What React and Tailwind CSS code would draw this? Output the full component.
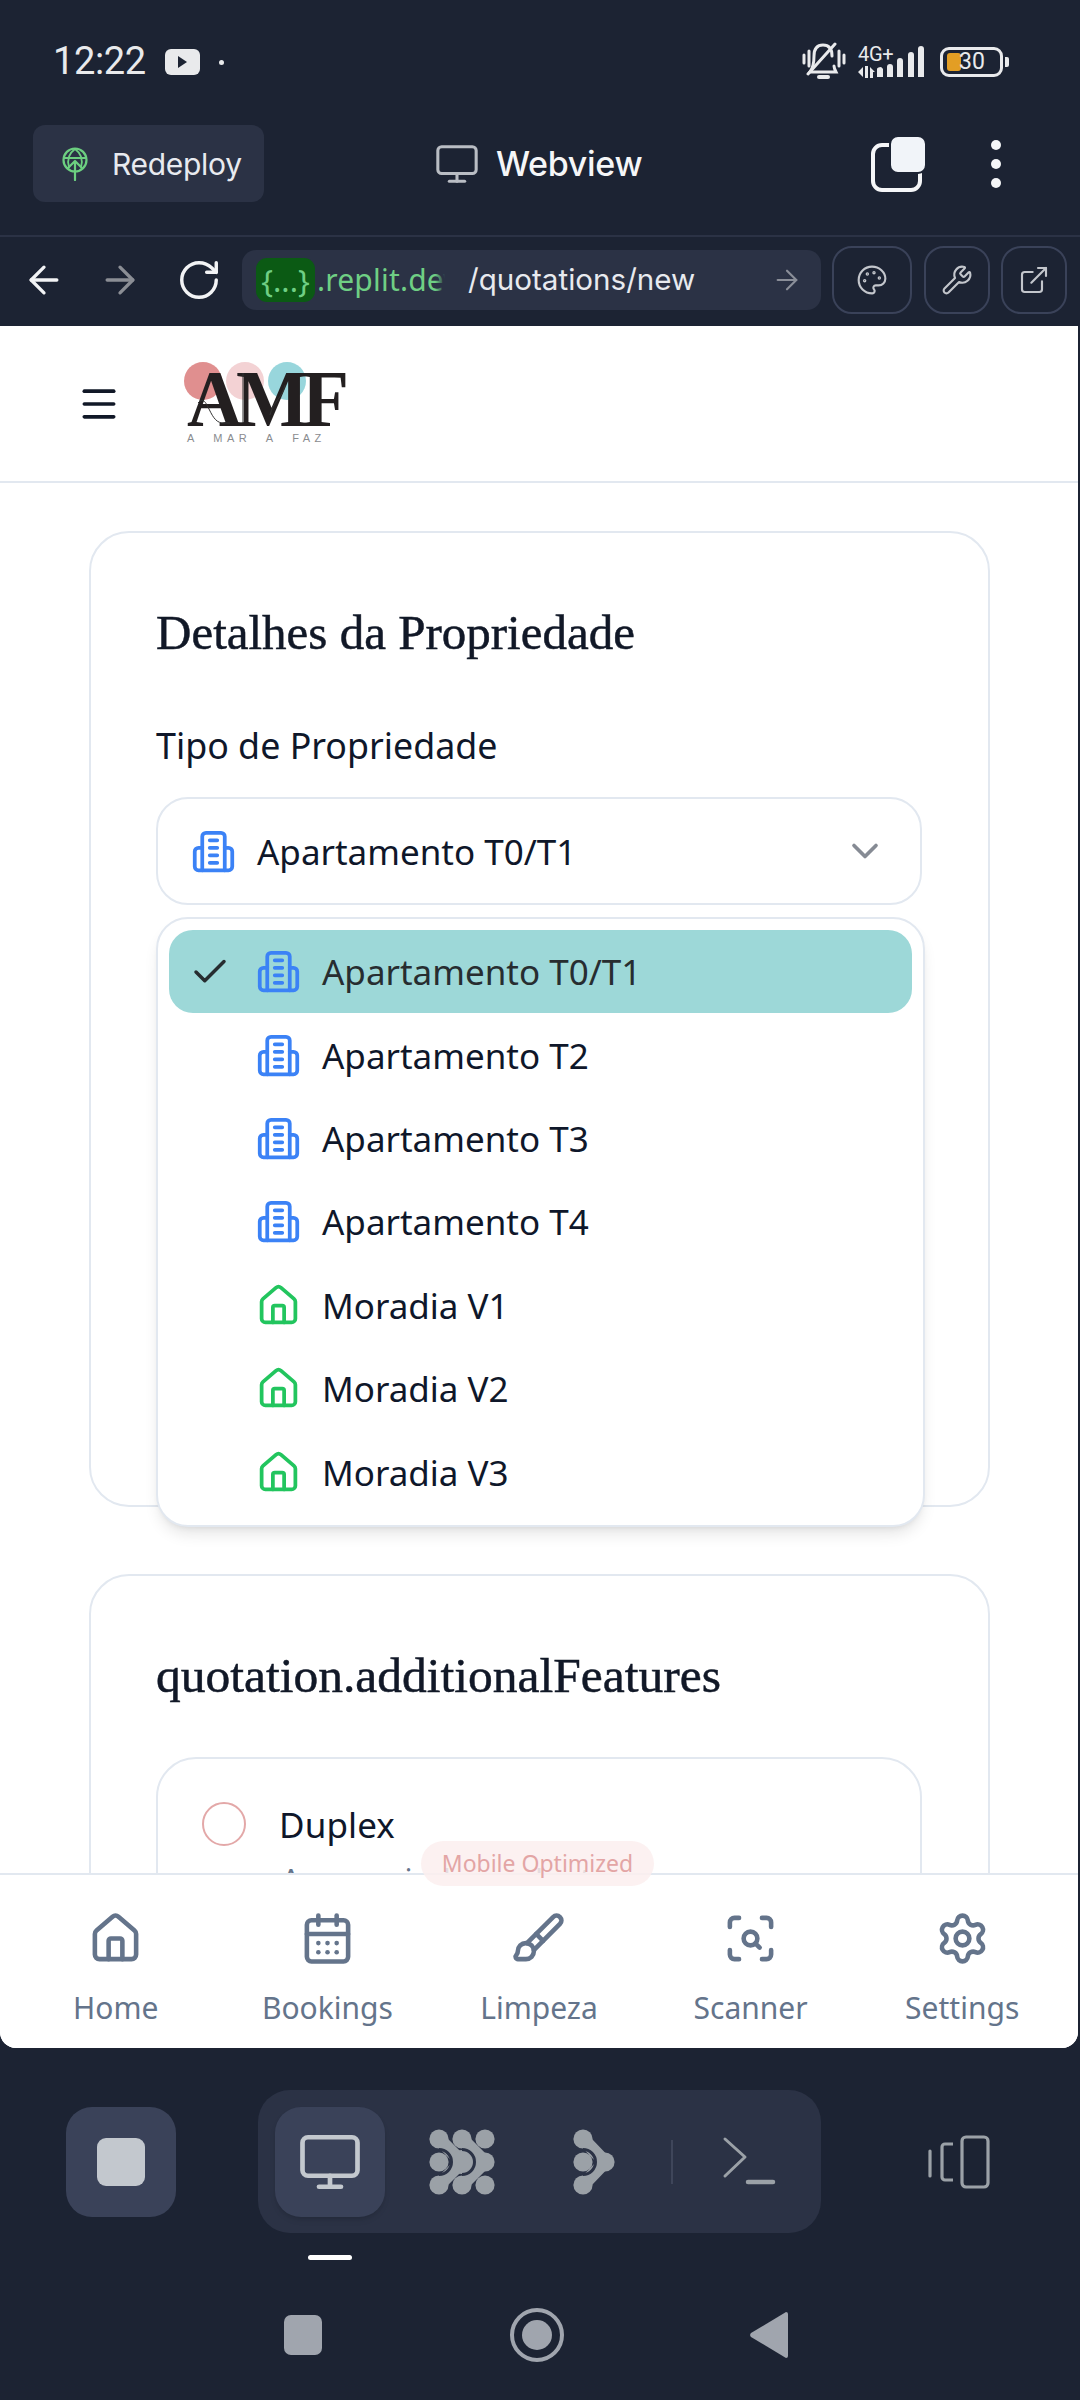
import React from "react";
import { House, CalendarDays, Brush, ScanSearch, Settings, Palette, Wrench, ExternalLink, RotateCw, ArrowLeft, ArrowRight, ChevronDown, Check, Monitor, Menu } from "lucide-react";

const sans = { fontFamily: '"Noto Sans", sans-serif' };

function Building({ className = "" }) {
  return (
    <svg width="45" height="45" viewBox="0 0 24 24" fill="none" stroke="#3b82f6" strokeWidth="2" strokeLinecap="round" strokeLinejoin="round" className={className}>
      <path d="M6 22V4a2 2 0 0 1 2-2h8a2 2 0 0 1 2 2v18Z" />
      <path d="M6 10H4a2 2 0 0 0-2 2v8a2 2 0 0 0 2 2h2" />
      <path d="M18 10h2a2 2 0 0 1 2 2v8a2 2 0 0 1-2 2h-2" />
      <path d="M10 6h4M10 10h4M10 14h4M10 18h4" />
    </svg>
  );
}

function HomeIcon() {
  return <House size={45} color="#22c55e" strokeWidth={2} />;
}

const options = [
  ["Apartamento T0/T1", "b", true],
  ["Apartamento T2", "b"],
  ["Apartamento T3", "b"],
  ["Apartamento T4", "b"],
  ["Moradia V1", "h"],
  ["Moradia V2", "h"],
  ["Moradia V3", "h"],
];

const navItems = [
  ["Home", House],
  ["Bookings", CalendarDays],
  ["Limpeza", Brush],
  ["Scanner", ScanSearch],
  ["Settings", Settings],
];

function StatusBar() {
  return (
    <div className="h-[125px] flex items-center text-[#e9eaec] pb-[1px]" style={{ fontFamily: "Roboto, sans-serif" }}>
      <div className="ml-[53px] w-[93px] text-[38px] leading-none mb-[2px] tracking-[-0.4px] whitespace-nowrap">12:22</div>
      <div className="ml-[19px] w-[35px] h-[26px] rounded-[6px] bg-[#e9eaec] flex items-center justify-center">
        <div className="w-0 h-0 border-y-[6px] border-y-transparent border-l-[9px] border-l-[#1c2333]" />
      </div>
      <div className="ml-[19px] w-[5px] h-[5px] rounded-full bg-[#e9eaec]" />
      <svg className="ml-[578px]" width="44" height="40" viewBox="0 0 44 40" fill="none" stroke="#e9eaec" strokeWidth="3" strokeLinecap="round">
        <path d="M2 13v8M42 13v8" strokeWidth="3" />
        <path d="M7 9v15M37 9v15" strokeWidth="3" />
        <path d="M30 14c0-7-3-11-9-11-6 0-9 4-9 11 0 6-1 12-4 16h26c-1-2-2-4-2-6" />
        <path d="M33 2 6 32" />
        <path d="M17 35h9" strokeWidth="4" />
      </svg>
      <div className="ml-[12px] w-[36px] flex flex-col">
        <div className="text-[20px] leading-[16px] tracking-[-0.3px] whitespace-nowrap">4G+</div>
        <svg width="36" height="14" viewBox="0 0 36 14" fill="#e9eaec" className="mt-[3px]">
          <path d="M0 7 5 2v10zM7 1h3v12H7zM12 2l5 5h-2v6h-3z" />
        </svg>
      </div>
      <svg className="ml-[-17px]" width="48" height="32" viewBox="0 0 48 32" fill="#e9eaec">
        <path d="M0 31V26a3 3 0 0 1 6-3v8zM21 0 M10 31V21a3 3 0 0 1 6 0v10zM20 31V15a3 3 0 0 1 6 0v16zM31 31V9a3 3 0 0 1 6 0v22zM41 31V3a3 3 0 0 1 6 0v28z" />
      </svg>
      <div className="ml-[15px] relative w-[63px] h-[30px] rounded-[9px] border-[3px] border-[#e9eaec]">
        <div className="absolute left-[4px] top-[3px] w-[14px] h-[18px] rounded-[3px] bg-[#e39e24]" />
        <div className="absolute left-[16px] top-[-1px] text-[23px] leading-[26px]">30</div>
      </div>
      <div className="ml-[2px] w-[4px] h-[10px] rounded-r-[2px] bg-[#e9eaec]" />
    </div>
  );
}

function ToolbarRow() {
  return (
    <div className="h-[112px] border-b-2 border-[#2b3245] text-white" style={{ fontFamily: "Inter, sans-serif" }}>
      <div className="h-[77px] flex items-center">
        <div className="ml-[33px] w-[231px] h-[77px] rounded-[12px] bg-[#2b3245] flex items-center">
          <svg className="ml-[29px]" width="26" height="34" viewBox="0 0 26 34" fill="none" stroke="#6ccf80" strokeWidth="2.2" strokeLinecap="round" strokeLinejoin="round">
            <circle cx="13" cy="13" r="11.5" />
            <path d="M2 11h22M13 2c-7 5-8 11-6 18M13 2c7 5 8 11 6 18" strokeWidth="1.8" />
            <path d="M13 33V14M6 21l7-7 7 7" stroke="#6ccf80" />
          </svg>
          <div className="ml-[24px] text-[30px] leading-none text-[#e8eaef] tracking-[-0.3px]">Redeploy</div>
        </div>
        <Monitor className="ml-[170px]" size={46} color="#b9bdc4" strokeWidth={1.6} />
        <div className="ml-[16px] text-[34px] leading-none font-medium text-[#f5f6f8] tracking-[-0.3px]">Webview</div>
        <svg className="ml-[228px]" width="56" height="56" viewBox="0 0 56 56" fill="none">
          <rect x="3" y="9" width="47" height="45" rx="9" stroke="#f5f6f8" strokeWidth="4" />
          <rect x="20" y="0" width="36" height="37" rx="8" fill="#f1f4f9" stroke="#1c2333" strokeWidth="2" />
        </svg>
        <div className="ml-[65px] flex flex-col gap-[9px]">
          <div className="w-[10px] h-[10px] rounded-full bg-[#f5f6f8]" />
          <div className="w-[10px] h-[10px] rounded-full bg-[#f5f6f8]" />
          <div className="w-[10px] h-[10px] rounded-full bg-[#f5f6f8]" />
        </div>
      </div>
    </div>
  );
}

function UrlRow() {
  return (
    <div className="h-[89px] pb-[3px] flex items-center" style={{ fontFamily: "Inter, sans-serif" }}>
      <ArrowLeft className="ml-[22px]" size={44} color="#f2f3f5" strokeWidth={1.8} />
      <ArrowRight className="ml-[32px]" size={44} color="#8b8e95" strokeWidth={1.8} />
      <RotateCw className="ml-[34px]" size={46} color="#f2f3f5" strokeWidth={1.8} />
      <div className="ml-[20px] w-[579px] h-[60px] rounded-[14px] bg-[#2b3245] flex items-center">
        <div className="ml-[14px] w-[59px] h-[44px] rounded-[11px] bg-[#0b5a14] flex items-center justify-center text-[31px] text-[#6fcf84] leading-none" style={sans}>{"{...}"}</div>
        <div className="relative ml-[2px] w-[128px] overflow-hidden whitespace-nowrap text-[30px] leading-[40px] text-[#6fcf84] tracking-[0.2px]" style={sans}>
          .replit.dev
          <div className="absolute right-0 top-0 h-full w-[10px] bg-gradient-to-r from-transparent to-[#2b3245]" />
        </div>
        <div className="ml-[23px] text-[29.6px] leading-none text-[#e8eaef] whitespace-nowrap">/quotations/new</div>
        <ArrowRight className="ml-[76px]" size={32} color="#8b8f99" strokeWidth={1.6} />
      </div>
      <div className="ml-[11px] w-[80px] h-[68px] rounded-[20px] border-2 border-[#3a4259] flex items-center justify-center">
        <Palette size={32} color="#c3c6cc" strokeWidth={1.6} />
      </div>
      <div className="ml-[12px] w-[66px] h-[68px] rounded-[20px] border-2 border-[#3a4259] flex items-center justify-center">
        <Wrench size={32} color="#c3c6cc" strokeWidth={1.6} />
      </div>
      <div className="ml-[11px] w-[66px] h-[68px] rounded-[20px] border-2 border-[#3a4259] flex items-center justify-center">
        <ExternalLink size={32} color="#c3c6cc" strokeWidth={1.6} />
      </div>
    </div>
  );
}

function Logo() {
  return (
    <div className="relative ml-[62px] w-[170px] h-[90px]">
      <div className="absolute left-[1px] top-[3px] w-[38px] h-[38px] rounded-full bg-[#e08f8f]" />
      <div className="absolute left-[43px] top-[3px] w-[38px] h-[38px] rounded-full bg-[#f3d2d4]" />
      <div className="absolute left-[85px] top-[3px] w-[38px] h-[38px] rounded-full bg-[#98d6dc]" />
      <div className="absolute left-[4px] top-[0px] text-[81px] leading-[80px] font-bold text-[#231f20] whitespace-nowrap tracking-[-7px] origin-left scale-x-[0.95]" style={{ fontFamily: '"Liberation Serif", serif' }}>AMF</div>
      <svg className="absolute left-0 top-0" width="170" height="70" viewBox="0 0 170 70" fill="none" stroke="#333333" strokeWidth="1">
        <path d="M15 44c5-6 8 0 10 4 4 8 7 15 14 16h8" />
        <path d="M60 14v50" />
        <path d="M102 26c-3 14-12 16-15 30" />
      </svg>
      <div className="absolute left-[4px] top-[73px] text-[11px] leading-[12px] text-[#8a8c8f] whitespace-pre tracking-[4.5px]" style={{ fontFamily: '"Liberation Sans", sans-serif' }}>A  MAR  A  FAZ</div>
    </div>
  );
}

function Dropdown() {
  return (
    <div className="absolute left-0 top-[120px] w-[769px] bg-white rounded-[32px] border-2 border-[#e2e8f0] px-[11px] py-[11px] shadow-lg">
      {options.map(([label, kind, active]) => (
        <div key={label} className={`h-[83.4px] flex items-center rounded-[24px] ${active ? "bg-[#9dd8d8] text-[#272d30]" : "text-[#0f172a]"}`}>
          <div className="w-[88px] pl-[20px] shrink-0">{active && <Check size={42} color="#272d30" strokeWidth={2} />}</div>
          <div className="w-[45px] h-[45px] shrink-0 ml-[-1px]">
            {kind === "b" ? <Building /> : <HomeIcon />}
          </div>
          <div className="ml-[21px] text-[35px] leading-none">{label}</div>
        </div>
      ))}
    </div>
  );
}

function Content() {
  return (
    <div className="flex-1 min-h-0 overflow-hidden pt-[48px]" style={sans}>
      <div className="ml-[89px] w-[901px] h-[976px] rounded-[40px] border-2 border-[#e2e8f0] px-[65px] pt-[64px]">
        <div className="h-[72px] text-[49px] leading-[72px] text-[#111827] whitespace-nowrap [-webkit-text-stroke:0.5px]" style={{ fontFamily: '"Liberation Serif", serif' }}>Detalhes da Propriedade</div>
        <div className="mt-[51px] text-[35.8px] leading-[50px] text-[#0f172a]">Tipo de Propriedade</div>
        <div className="relative mt-[27px]">
          <div className="w-[766px] h-[108px] rounded-[32px] border-2 border-[#e2e8f0] flex items-center">
            <Building className="ml-[33px] shrink-0" />
            <div className="ml-[21px] text-[35px] leading-none text-[#0f172a]">Apartamento T0/T1</div>
            <ChevronDown className="ml-auto mr-[33px]" size={44} color="#868b94" strokeWidth={2} />
          </div>
          <Dropdown />
        </div>
      </div>
      <div className="ml-[89px] mt-[67px] w-[901px] h-[500px] rounded-[40px] border-2 border-[#e2e8f0] px-[65px] pt-[67px]">
        <div className="h-[66px] text-[49.5px] leading-[66px] text-[#111827] whitespace-nowrap [-webkit-text-stroke:0.5px]" style={{ fontFamily: '"Liberation Serif", serif' }}>quotation.additionalFeatures</div>
        <div className="mt-[48px] w-[766px] h-[300px] rounded-[40px] border-2 border-[#e2e8f0] pl-[44px] pt-[43px]">
          <div className="flex items-center h-[44px]">
            <div className="w-[44px] h-[44px] rounded-full border-2 border-[#e3a8a8]" />
            <div className="ml-[33px] text-[35px] leading-none text-[#0f172a] tracking-[0.1px]">Duplex</div>
          </div>
          <div className="ml-[79px] mt-[11px] text-[31px] leading-[44px] text-[#64748b] whitespace-nowrap">Acessos independentes</div>
        </div>
      </div>
    </div>
  );
}

function BottomNav() {
  return (
    <div className="h-[175px] shrink-0 border-t-2 border-[#e2e8f0] bg-white px-[10px] grid grid-cols-5" style={sans}>
      {navItems.map(([label, Icon]) => (
        <div key={label} className="flex flex-col items-center pt-[36px]">
          <Icon size={55} color="#64748b" strokeWidth={2} />
          <div className="mt-[20px] text-[30px] leading-[44px] text-[#64748b]">{label}</div>
        </div>
      ))}
    </div>
  );
}

function DevBar() {
  return (
    <div className="flex items-center mt-[42px] h-[143px]">
      <div className="ml-[66px] w-[110px] h-[110px] rounded-[26px] bg-[#3a4259] flex items-center justify-center">
        <div className="w-[48px] h-[48px] rounded-[9px] bg-[#c3c8ce]" />
      </div>
      <div className="ml-[82px] w-[563px] h-[143px] rounded-[32px] bg-[#2b3245] flex items-center pl-[17px]">
        <div className="w-[110px] h-[110px] rounded-[26px] bg-[#3a4259] shadow-md flex items-center justify-center">
          <Monitor size={66} color="#c3c8ce" strokeWidth={1.7} />
        </div>
        <svg className="ml-[44px]" width="66" height="66" viewBox="0 0 66 66" fill="#9ba1a7">
          <path d="M10 10 33 33M33 10 56 33M10 56 33 33M33 56 56 33M33 33H56" stroke="#9ba1a7" strokeWidth="13" />
          <circle cx="10" cy="10" r="9.6" /><circle cx="33" cy="10" r="9.6" /><circle cx="56" cy="10" r="9.6" />
          <circle cx="10" cy="33" r="9.6" /><circle cx="33" cy="33" r="12" /><circle cx="56" cy="33" r="9.6" />
          <circle cx="10" cy="56" r="9.6" /><circle cx="33" cy="56" r="9.6" /><circle cx="56" cy="56" r="9.6" />
          <path d="M10 20.5A12.5 12.5 0 0 1 10 45.5" fill="none" stroke="#2b3245" strokeWidth="3" />
          <path d="M33 20.5A12.5 12.5 0 0 1 33 45.5" fill="none" stroke="#2b3245" strokeWidth="3" />
        </svg>
        <svg className="ml-[78px]" width="42" height="66" viewBox="0 0 42 66" fill="#9ba1a7">
          <path d="M10 10 32 33M10 56 32 33" stroke="#9ba1a7" strokeWidth="13" />
          <circle cx="10" cy="10" r="9.6" /><circle cx="10" cy="33" r="9.6" /><circle cx="10" cy="56" r="9.6" /><circle cx="32" cy="33" r="9.6" />
          <path d="M10 20.5A12.5 12.5 0 0 1 10 45.5" fill="none" stroke="#2b3245" strokeWidth="3" />
        </svg>
        <div className="ml-[56px] w-[2px] h-[44px] bg-[#3f465a]" />
        <svg className="ml-[46px]" width="60" height="52" viewBox="0 0 60 52" fill="none" stroke="#9ba1a7" strokeWidth="3" strokeLinecap="round" strokeLinejoin="round">
          <path d="M6 3 26 21 6 40" />
          <path d="M29 46H54" strokeWidth="4.5" />
        </svg>
      </div>
      <svg className="ml-[107px]" width="62" height="54" viewBox="0 0 62 54" fill="none" stroke="#9ba1a7" strokeWidth="3.2" strokeLinejoin="round">
        <path d="M2 16V41" strokeLinecap="round" />
        <path d="M25 9H17a3 3 0 0 0-3 3v30a3 3 0 0 0 3 3h8" />
        <rect x="34" y="2" width="26" height="50" rx="4" />
      </svg>
    </div>
  );
}

export default function App() {
  return (
    <div className="w-[1080px] h-[2400px] bg-[#1c2333] flex flex-col overflow-hidden">
      <StatusBar />
      <ToolbarRow />
      <UrlRow />
      <div className="relative w-[1078px] h-[1722px] shrink-0 bg-white rounded-b-[16px] overflow-hidden flex flex-col">
        <div className="h-[157px] shrink-0 border-b-2 border-[#e2e8f0] flex items-center">
          <Menu className="ml-[77px]" size={44} color="#111827" strokeWidth={2} />
          <Logo />
        </div>
        <Content />
        <BottomNav />
        <div className="absolute left-[421px] top-[1515px] w-[233px] h-[45px] rounded-full bg-[#fbefef]/85 flex items-center justify-center text-[23px] leading-none text-[#e3a5a5]" style={sans}>Mobile Optimized</div>
      </div>
      <DevBar />
      <div className="ml-[308px] mt-[22px] w-[44px] h-[5px] rounded-full bg-white" />
      <div className="mt-[48px] flex items-center h-[54px]">
        <div className="ml-[284px] w-[38px] h-[40px] rounded-[7px] bg-[#a0a5ae]" />
        <div className="ml-[188px] w-[54px] h-[54px] rounded-full border-[4px] border-[#a0a5ae] flex items-center justify-center">
          <div className="w-[30px] h-[30px] rounded-full bg-[#a0a5ae]" />
        </div>
        <svg className="ml-[186px]" width="38" height="48" viewBox="0 0 38 48" fill="#a0a5ae">
          <path d="M36 1a2 2 0 0 1 2 2v42a2 2 0 0 1-2 2L1 26a3 3 0 0 1 0-4z" />
        </svg>
      </div>
    </div>
  );
}
